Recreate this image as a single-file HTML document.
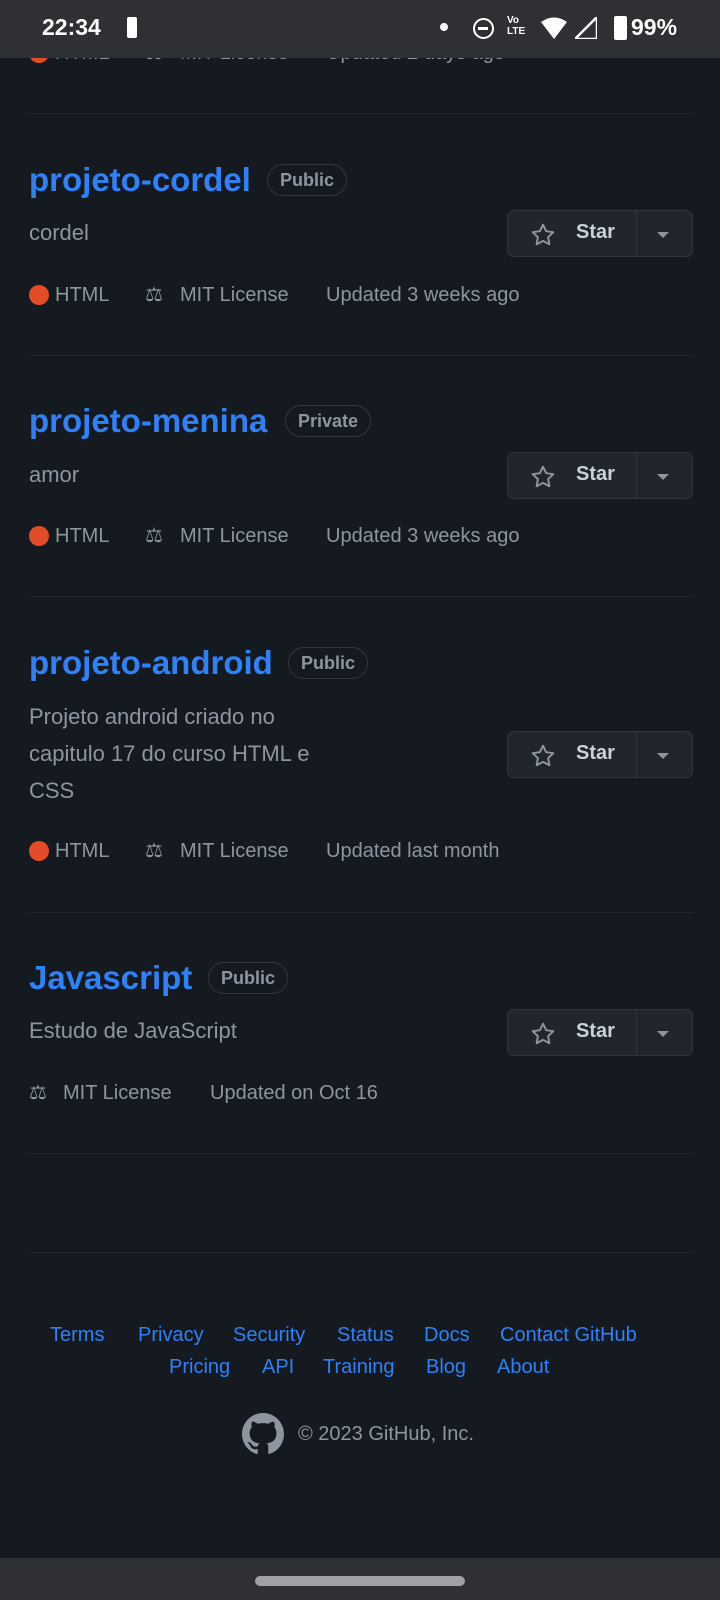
<!DOCTYPE html>
<html><head><meta charset="utf-8"><style>
*{margin:0;padding:0;box-sizing:border-box}
body{width:720px;height:1600px;background:#151a21;font-family:"Liberation Sans",sans-serif;position:relative;overflow:hidden;color:#8d96a0}
.a{position:absolute;white-space:nowrap}
.sb{top:0;left:0;width:720px;height:58px;background:#2f3033;color:#fff}
.hr{position:absolute;left:29px;width:664px;height:1px;background:#222832}
.t{font-weight:bold;font-size:33px;color:#2f81f7;left:29px;line-height:40px}
.badge{font-size:18px;font-weight:bold;color:#8d96a0;border:1px solid #30363d;border-radius:16px;padding:0 12px;line-height:30px}
.d{left:29px;font-size:22px;line-height:37px}
.m{font-size:20px;line-height:24px}
.dot{position:absolute;width:20px;height:20px;border-radius:50%;background:#e34c26}
.btn{left:507px;width:186px;height:47px;background:#21262d;border:1px solid #30363d;border-radius:7px}
.btn .s{position:absolute;left:68px;top:10px;font-size:20px;font-weight:bold;color:#c9d1d9}
.btn .dv{position:absolute;left:128px;top:0;width:1px;height:45px;background:#30363d}
.btn .car{position:absolute;left:149px;top:21px;border-left:6px solid transparent;border-right:6px solid transparent;border-top:6px solid #8d96a0}
.btn svg{position:absolute;left:22px;top:11px}
.f{font-size:20px;color:#2f81f7}
</style></head><body>
<div class="dot" style="left:29px;top:43px"></div>
<div class="a m" style="left:55px;top:41px">HTML</div>
<div class="a m" style="left:145px;top:41px">⚖</div>
<div class="a m" style="left:180px;top:41px">MIT License</div>
<div class="a m" style="left:326px;top:41px">Updated 2 days ago</div>
<div class="a sb">
<div class="a" style="left:42px;top:14px;font-size:23px;font-weight:bold">22:34</div>
<div class="a" style="left:127px;top:17px;width:10px;height:21px;background:#fff;border-radius:2px"></div>
<div class="a" style="left:440px;top:23px;width:8px;height:8px;background:#fff;border-radius:50%"></div>
<div class="a" style="left:473px;top:18px;width:21px;height:21px;border:2.5px solid #fff;border-radius:50%"><div style="position:absolute;left:3px;top:7px;width:10px;height:2.5px;background:#fff"></div></div>
<div class="a" style="left:507px;top:15px;font-size:10px;font-weight:bold;line-height:11px">Vo<br>LTE</div>
<svg class="a" style="left:541px;top:17px" width="26" height="22"><path d="M0 5 Q13 -4 26 5 L13 22Z" fill="#fff"/></svg>
<svg class="a" style="left:575px;top:17px" width="22" height="22"><path d="M22 0 V22 H0Z" fill="none" stroke="#fff" stroke-width="2.5"/></svg>
<div class="a" style="left:614px;top:16px;width:13px;height:24px;background:#fff;border-radius:2px"></div>
<div class="a" style="left:631px;top:14px;font-size:23px;font-weight:bold">99%</div>
</div>
<div class="hr" style="top:113px"></div>
<div class="hr" style="top:355px"></div>
<div class="hr" style="top:596px"></div>
<div class="hr" style="top:912px"></div>
<div class="hr" style="top:1153px"></div>
<div class="hr" style="top:1252px"></div>

<div class="a t" style="top:160px">projeto-cordel</div>
<div class="a badge" style="left:267px;top:164px">Public</div>
<div class="a d" style="top:214px">cordel</div>
<div class="dot" style="left:29px;top:285px"></div>
<div class="a m" style="left:55px;top:283px">HTML</div>
<div class="a m" style="left:145px;top:283px">⚖</div>
<div class="a m" style="left:180px;top:283px">MIT License</div>
<div class="a m" style="left:326px;top:283px">Updated 3 weeks ago</div>

<div class="a t" style="top:401px">projeto-menina</div>
<div class="a badge" style="left:285px;top:405px">Private</div>
<div class="a d" style="top:456px">amor</div>
<div class="dot" style="left:29px;top:526px"></div>
<div class="a m" style="left:55px;top:524px">HTML</div>
<div class="a m" style="left:145px;top:524px">⚖</div>
<div class="a m" style="left:180px;top:524px">MIT License</div>
<div class="a m" style="left:326px;top:524px">Updated 3 weeks ago</div>

<div class="a t" style="top:643px">projeto-android</div>
<div class="a badge" style="left:288px;top:647px">Public</div>
<div class="a d" style="top:698px">Projeto android criado no<br>capitulo 17 do curso HTML e<br>CSS</div>
<div class="dot" style="left:29px;top:841px"></div>
<div class="a m" style="left:55px;top:839px">HTML</div>
<div class="a m" style="left:145px;top:839px">⚖</div>
<div class="a m" style="left:180px;top:839px">MIT License</div>
<div class="a m" style="left:326px;top:839px">Updated last month</div>

<div class="a t" style="top:958px">Javascript</div>
<div class="a badge" style="left:208px;top:962px">Public</div>
<div class="a d" style="top:1012px">Estudo de JavaScript</div>
<div class="a m" style="left:29px;top:1081px">⚖</div>
<div class="a m" style="left:63px;top:1081px">MIT License</div>
<div class="a m" style="left:210px;top:1081px">Updated on Oct 16</div>

<div class="a btn" style="top:210px"><svg width="26" height="26" viewBox="0 0 24 24"><path d="M12 2.5l2.9 6 6.6.9-4.8 4.6 1.2 6.5L12 17.4 6.1 20.5l1.2-6.5L2.5 9.4l6.6-.9z" fill="none" stroke="#8d96a0" stroke-width="1.8" stroke-linejoin="round"/></svg><span class="s">Star</span><div class="dv"></div><div class="car"></div></div>
<div class="a btn" style="top:452px"><svg width="26" height="26" viewBox="0 0 24 24"><path d="M12 2.5l2.9 6 6.6.9-4.8 4.6 1.2 6.5L12 17.4 6.1 20.5l1.2-6.5L2.5 9.4l6.6-.9z" fill="none" stroke="#8d96a0" stroke-width="1.8" stroke-linejoin="round"/></svg><span class="s">Star</span><div class="dv"></div><div class="car"></div></div>
<div class="a btn" style="top:731px"><svg width="26" height="26" viewBox="0 0 24 24"><path d="M12 2.5l2.9 6 6.6.9-4.8 4.6 1.2 6.5L12 17.4 6.1 20.5l1.2-6.5L2.5 9.4l6.6-.9z" fill="none" stroke="#8d96a0" stroke-width="1.8" stroke-linejoin="round"/></svg><span class="s">Star</span><div class="dv"></div><div class="car"></div></div>
<div class="a btn" style="top:1009px"><svg width="26" height="26" viewBox="0 0 24 24"><path d="M12 2.5l2.9 6 6.6.9-4.8 4.6 1.2 6.5L12 17.4 6.1 20.5l1.2-6.5L2.5 9.4l6.6-.9z" fill="none" stroke="#8d96a0" stroke-width="1.8" stroke-linejoin="round"/></svg><span class="s">Star</span><div class="dv"></div><div class="car"></div></div>

<div class="a f" style="left:50px;top:1324px">Terms</div>
<div class="a f" style="left:138px;top:1324px">Privacy</div>
<div class="a f" style="left:233px;top:1324px">Security</div>
<div class="a f" style="left:337px;top:1324px">Status</div>
<div class="a f" style="left:424px;top:1324px">Docs</div>
<div class="a f" style="left:500px;top:1324px">Contact GitHub</div>
<div class="a f" style="left:169px;top:1356px">Pricing</div>
<div class="a f" style="left:262px;top:1356px">API</div>
<div class="a f" style="left:323px;top:1356px">Training</div>
<div class="a f" style="left:426px;top:1356px">Blog</div>
<div class="a f" style="left:497px;top:1356px">About</div>
<svg class="a" style="left:242px;top:1413px" width="42" height="42" viewBox="0 0 16 16"><path fill="#8d96a0" d="M8 0C3.58 0 0 3.58 0 8c0 3.540 2.29 6.53 5.47 7.59.4.07.55-.17.55-.38 0-.19-.01-.82-.01-1.49-2.01.37-2.530-.49-2.69-.94-.09-.23-.48-.94-.82-1.13-.28-.15-.68-.52-.01-.53.63-.01 1.08.58 1.23.82.72 1.21 1.87.87 2.33.66.07-.52.28-.87.51-1.07-1.78-.2-3.64-.89-3.64-3.95 0-.87.31-1.59.82-2.15-.08-.2-.36-1.02.08-2.12 0 0 .67-.21 2.2.82.64-.18 1.32-.27 2-.27.68 0 1.36.09 2 .27 1.53-1.04 2.2-.82 2.2-.82.44 1.1.16 1.92.08 2.12.51.56.82 1.27.82 2.15 0 3.07-1.87 3.75-3.65 3.95.29.25.54.73.54 1.48 0 1.07-.01 1.93-.01 2.2 0 .21.15.46.55.38A8.013 8.013 0 0016 8c0-4.42-3.58-8-8-8z"/></svg>
<div class="a" style="left:298px;top:1423px;font-size:20px">© 2023 GitHub, Inc.</div>
<div class="a" style="left:0;top:1558px;width:720px;height:42px;background:#2f3033"></div>
<div class="a" style="left:255px;top:1576px;width:210px;height:10px;border-radius:5px;background:#a0a1a5"></div>
</body></html>
